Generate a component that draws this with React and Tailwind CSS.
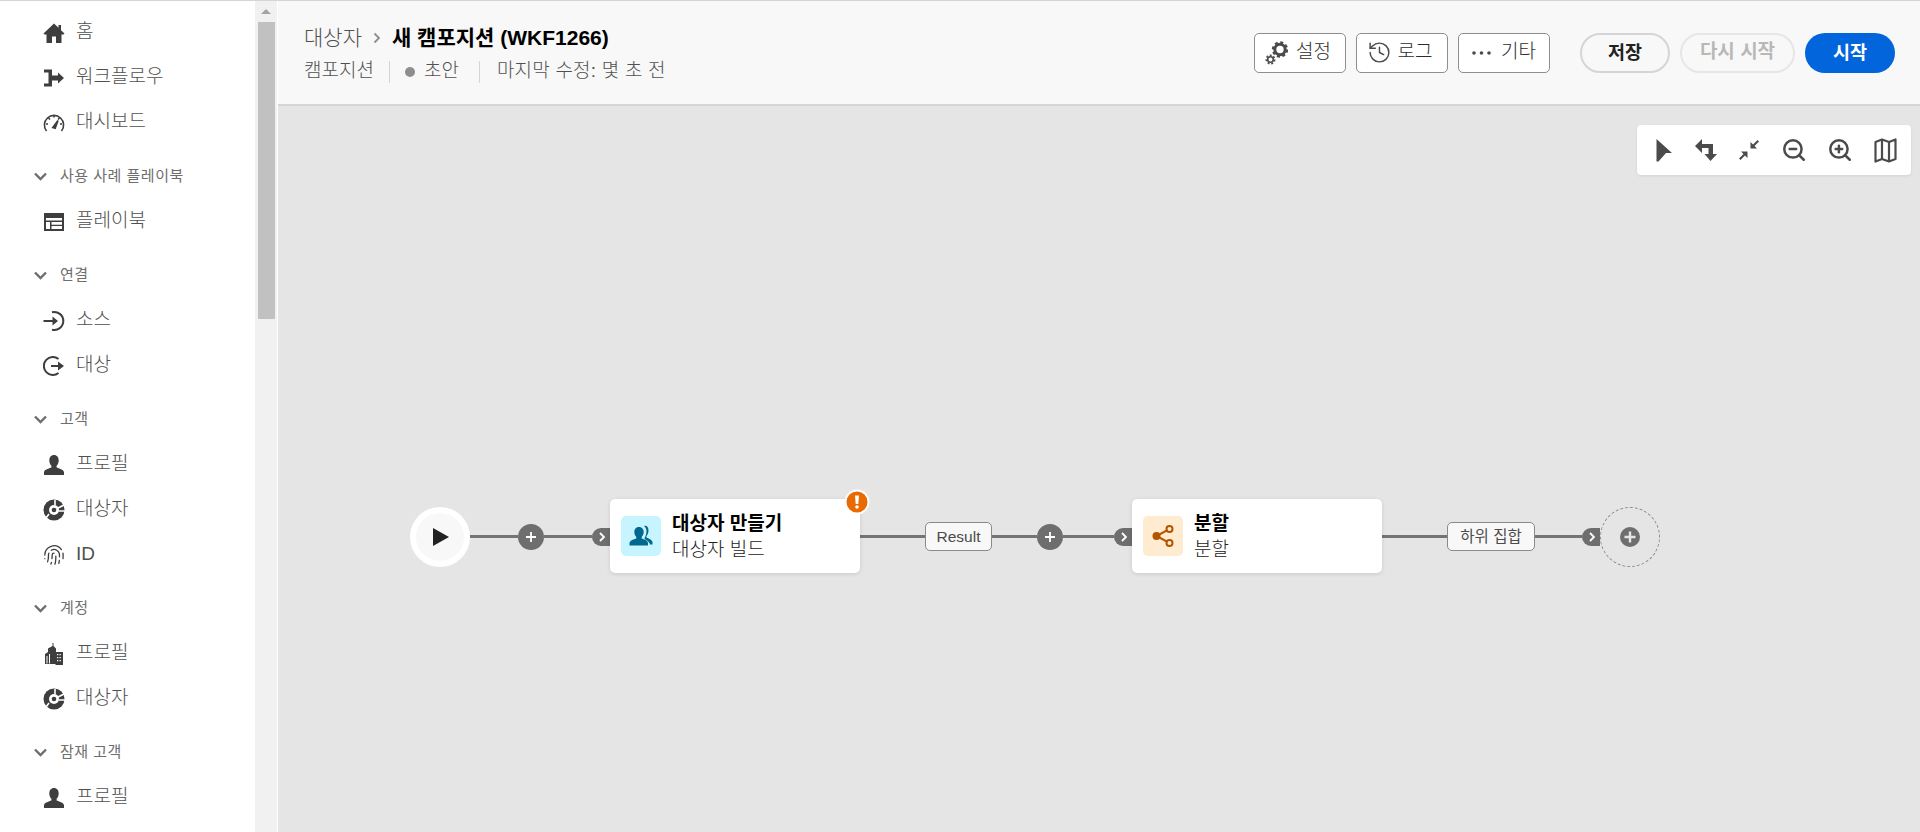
import { History, Fingerprint, ZoomIn, ZoomOut } from "lucide-react";

const FONT = "[font-family:'Liberation_Sans','Noto_Sans_CJK_KR',sans-serif]";

/* Sidebar icons */
const HomeIcon = () => (
  <svg width="22" height="22" viewBox="0 0 22 22" fill="currentColor">
    <path d="M11 1.5 L0.5 11.5 L1.5 12.5 H3.5 V21 H9 V14.5 H13 V21 H18.5 V12.5 H20.5 L21.5 11.5 L18 8.2 V3 H15.5 V5.8 Z" />
  </svg>
);
const WorkflowIcon = () => (
  <svg width="22" height="22" viewBox="0 0 22 22" fill="currentColor">
    <path d="M1 2.5 H9 V8.5 H15 V5.5 L21 11 L15 16.5 V13.5 H9 V19.5 H1 V16.5 H5.5 V5.5 H1 Z" />
  </svg>
);
const GaugeIcon = () => (
  <svg width="22" height="22" viewBox="0 0 22 22" fill="none" stroke="currentColor" strokeWidth="1.6">
    <path d="M3.5 19 A9.6 9.6 0 1 1 18.5 19" />
    <path d="M11 3.5 V5.5 M5.5 6 L7 7.5 M16.5 6 L15 7.5 M3 12 H5 M17 12 H19" />
    <path d="M9.8 15.5 L15 8.5 L12.2 16.3 Z" fill="currentColor" />
  </svg>
);
const TableIcon = () => (
  <svg width="22" height="22" viewBox="0 0 22 22" fill="currentColor">
    <path fillRule="evenodd" d="M1 2 H21 V20 H1 Z M3 7 V9.5 H19 V7 Z M3 11 V18 H7 V11 Z M8.5 11 V13.7 H19 V11 Z M8.5 15 V18 H19 V15 Z" />
  </svg>
);
const SignInIcon = () => (
  <svg width="22" height="22" viewBox="0 0 22 22" fill="none" stroke="currentColor" strokeWidth="2">
    <path d="M9 2.3 A9 9 0 1 1 9 19.7" />
    <path d="M0.5 11 H12" />
    <path d="M9.5 6.5 L15 11 L9.5 15.5 Z" fill="currentColor" stroke="none" />
  </svg>
);
const SignOutIcon = () => (
  <svg width="22" height="22" viewBox="0 0 22 22" fill="none" stroke="currentColor" strokeWidth="2">
    <path d="M15.5 4 A9 9 0 1 0 15.5 18" />
    <path d="M8 11 H18" />
    <path d="M15 6.5 L21 11 L15 15.5 Z" fill="currentColor" stroke="none" />
  </svg>
);
const UserIcon = () => (
  <svg width="22" height="22" viewBox="0 0 22 22" fill="currentColor">
    <path d="M11 1 C14 1 15.7 3.4 15.7 6.4 C15.7 8.8 14.6 10.8 13.6 11.8 V13.4 C16 14.4 20.5 15.2 21 18 V21 H1 V18 C1.5 15.2 6 14.4 8.4 13.4 V11.8 C7.4 10.8 6.3 8.8 6.3 6.4 C6.3 3.4 8 1 11 1 Z" />
  </svg>
);
const SegmentIcon = () => (
  <svg width="22" height="22" viewBox="0 0 22 22">
    <circle cx="11" cy="11" r="10.5" fill="currentColor" />
    <circle cx="11" cy="11" r="5" fill="white" />
    <circle cx="11" cy="11" r="2.3" fill="currentColor" />
    <path d="M14 9.5 L22 5.5 M15.5 12 H22 M12 1 V6 M6 15 L3 19" stroke="white" strokeWidth="1.6" />
  </svg>
);
const BuildingIcon = () => (
  <svg width="22" height="22" viewBox="0 0 22 22" fill="currentColor">
    <path fillRule="evenodd" d="M9.5 0 H10.5 V3 L13 5.5 V9 H20 V22 H12.5 V21 H2 V11 L5 9 V5.5 L9.5 3 Z M6 11 V20.5 H7 V11 Z M3.5 13 V20.5 H4.5 V13 Z" />
    <path d="M14 11 H15.3 V12.3 H14 Z M16.5 11 H17.8 V12.3 H16.5 Z M14 14 H15.3 V15.3 H14 Z M16.5 14 H17.8 V15.3 H16.5 Z M14 17 H15.3 V18.3 H14 Z M16.5 17 H17.8 V18.3 H16.5 Z" fill="white" />
  </svg>
);
const Chevron = () => (
  <svg width="13" height="9" viewBox="0 0 13 9" fill="none" stroke="#6e6e6e" strokeWidth="2.4" className="shrink-0">
    <path d="M1 1.5 L6.5 7 L12 1.5" />
  </svg>
);

/* Header icons */
const GearsIcon = () => (
  <svg width="23" height="24" viewBox="0 0 23 24">
    <circle cx="15" cy="8.5" r="5.2" fill="none" stroke="#4b4b4b" strokeWidth="3" />
    <circle cx="15" cy="8.5" r="7" fill="none" stroke="#4b4b4b" strokeWidth="2.4" strokeDasharray="3 2.5" />
    <circle cx="5.5" cy="18.5" r="2.8" fill="none" stroke="#4b4b4b" strokeWidth="1.6" />
    <circle cx="5.5" cy="18.5" r="4.2" fill="none" stroke="#4b4b4b" strokeWidth="1.6" strokeDasharray="2 1.7" />
  </svg>
);
const MoreIcon = () => (
  <svg width="19" height="4" viewBox="0 0 19 4" fill="#4b4b4b">
    <circle cx="2" cy="2" r="1.8" />
    <circle cx="9.5" cy="2" r="1.8" />
    <circle cx="17" cy="2" r="1.8" />
  </svg>
);

/* Toolbar icons */
const CursorIcon = () => (
  <svg width="18" height="24" viewBox="0 0 18 24" fill="#4b4b4b">
    <path d="M1.5 1 L17 15 H11 L3.5 23.5 H1.5 Z" />
  </svg>
);
const FlipIcon = () => (
  <svg width="24" height="24" viewBox="0 0 24 24" fill="#4b4b4b">
    <path d="M8 1 V6 H19 V16 H23 L16.5 23 L10.5 16 H14.5 V10 H8 V15 L1 8 Z" />
  </svg>
);
const ShrinkIcon = () => (
  <svg width="22" height="22" viewBox="0 0 22 22" fill="#4b4b4b">
    <path d="M19.5 1 L21 2.5 L16.5 7 L19 9.5 H12.5 V3 L15 5.5 Z" />
    <path d="M2.5 21 L1 19.5 L5.5 15 L3 12.5 H9.5 V19 L7 16.5 Z" />
  </svg>
);
const FoldedMapIcon = () => (
  <svg width="23" height="25" viewBox="0 0 23 25" fill="none" stroke="#4b4b4b" strokeWidth="2.2" strokeLinejoin="round">
    <path d="M1.5 4 L8 1.5 L15 4 L21.5 1.5 V21 L15 23.5 L8 21 L1.5 23.5 Z" />
    <path d="M8 1.5 V21 M15 4 V23.5" />
  </svg>
);
const ShareIcon = () => (
  <svg width="24" height="24" viewBox="0 0 24 24" fill="none" stroke="#b35400" strokeWidth="2">
    <circle cx="5.5" cy="12" r="4" fill="#b35400" stroke="none" />
    <circle cx="18.5" cy="5" r="3" />
    <circle cx="18.5" cy="19" r="3" />
    <path d="M5.5 12 L16 6.3 M5.5 12 L16 17.7" />
  </svg>
);
const UsersIcon = () => (
  <svg width="24" height="24" viewBox="0 0 24 24" fill="#00678f">
    <path d="M15 2 C17.5 1 19.5 3 19.5 6.5 C19.5 9 18.5 11 17.5 12 V13.5 C19.5 14.5 23 15.5 23.5 18 V20.5 H21 C20.5 17 15 15.5 15.5 14 C16.5 12.5 17.5 10 17.5 7 C17.5 5 16.5 3 15 2 Z" />
    <path d="M10 3 C13 3 14.7 5.2 14.7 8 C14.7 10.2 13.6 12 12.7 13 V14.5 C15 15.4 18.6 16.2 19 19 V21.5 H0.5 V19 C1 16.2 5 15.4 7.3 14.5 V13 C6.4 12 5.3 10.2 5.3 8 C5.3 5.2 7 3 10 3 Z" />
  </svg>
);
const WarnBadge = () => (
  <svg width="26" height="26" viewBox="0 0 26 26" className="absolute right-[-10px] top-[-10px]">
    <circle cx="13" cy="13" r="12.5" fill="white" />
    <circle cx="13" cy="13" r="10.5" fill="#e86a00" />
    <path d="M11 6.5 H15 L14.3 15 H11.7 Z" fill="white" />
    <circle cx="13" cy="18" r="1.8" fill="white" />
  </svg>
);

const NavItem = ({ icon, label }) => (
  <div className="flex h-[45px] items-center pl-[43px] text-[#3e3e3e]">
    <span className="flex w-[33px] shrink-0">{icon}</span>
    <span className="text-[19px] font-light text-[#505050]">{label}</span>
  </div>
);

const NavHeader = ({ label }) => (
  <div className="mt-[9px] flex h-[45px] items-center gap-[13px] pl-[34px] text-[15px] tracking-[0.5px] text-[#6e6e6e]">
    <Chevron />
    <span>{label}</span>
  </div>
);

const Line = ({ className }) => <div className={`h-[3px] bg-[#747474] ${className}`} />;

const PlusDot = () => (
  <div className="mt-[2px] flex h-[26px] w-[26px] shrink-0 items-center justify-center rounded-full bg-[#6e6e6e]">
    <svg width="12" height="12" viewBox="0 0 12 12" stroke="white" strokeWidth="1.8">
      <path d="M6 1 V11 M1 6 H11" />
    </svg>
  </div>
);

const Tab = () => (
  <div className="mt-[2px] flex h-[18px] w-[18px] shrink-0 items-center justify-center rounded-l-full bg-[#6e6e6e] pl-[2px]">
    <svg width="6" height="10" viewBox="0 0 6 10" fill="none" stroke="white" strokeWidth="1.8">
      <path d="M1 1 L5 5 L1 9" />
    </svg>
  </div>
);

const EdgeLabel = ({ className, children }) => (
  <div className={`mt-[1px] flex h-[29px] shrink-0 items-center justify-center rounded-[5px] border border-[#8a8a8a] bg-[#f8f8f8] text-[15.5px] text-[#4b4b4b] ${className}`}>
    {children}
  </div>
);

const Card = ({ icon, iconBg, title, subtitle, warning }) => (
  <div className="relative flex h-[74px] w-[250px] shrink-0 items-center gap-[11px] rounded-[5px] bg-white pl-[11px] shadow-[0_1px_4px_rgba(0,0,0,0.12)]">
    <div className={`flex h-[40px] w-[40px] shrink-0 items-center justify-center rounded-[5px] ${iconBg}`}>{icon}</div>
    <div className="flex flex-col pt-[2px]">
      <span className="text-[19px] leading-[26px] font-bold text-black">{title}</span>
      <span className="text-[19px] leading-[26px] font-light text-[#222]">{subtitle}</span>
    </div>
    {warning && <WarnBadge />}
  </div>
);

const ActionButton = ({ icon, label, className }) => (
  <button className={`flex h-[40px] w-[92px] items-center justify-center rounded-[5px] border border-[#8e8e8e] bg-white text-[19px] font-light text-[#2c2c2c] ${className}`}>
    {icon}
    {label}
  </button>
);

export default function App() {
  return (
    <div className={`flex h-[832px] w-[1920px] overflow-hidden border-t border-[#d5d5d5] bg-white ${FONT}`}>
      {/* Sidebar */}
      <nav className="h-full w-[255px] shrink-0 overflow-hidden bg-white pt-[9px]">
        <NavItem icon={<HomeIcon />} label="홈" />
        <NavItem icon={<WorkflowIcon />} label="워크플로우" />
        <NavItem icon={<GaugeIcon />} label="대시보드" />
        <NavHeader label="사용 사례 플레이북" />
        <NavItem icon={<TableIcon />} label="플레이북" />
        <NavHeader label="연결" />
        <NavItem icon={<SignInIcon />} label="소스" />
        <NavItem icon={<SignOutIcon />} label="대상" />
        <NavHeader label="고객" />
        <NavItem icon={<UserIcon />} label="프로필" />
        <NavItem icon={<SegmentIcon />} label="대상자" />
        <NavItem icon={<Fingerprint size={22} strokeWidth={1.4} />} label="ID" />
        <NavHeader label="계정" />
        <NavItem icon={<BuildingIcon />} label="프로필" />
        <NavItem icon={<SegmentIcon />} label="대상자" />
        <NavHeader label="잠재 고객" />
        <NavItem icon={<UserIcon />} label="프로필" />
        <NavItem icon={<BuildingIcon />} />
      </nav>

      {/* Scrollbar */}
      <div className="flex h-full w-[22px] shrink-0 flex-col items-center bg-[#f1f1f1]">
        <div className="flex h-[21px] items-center">
          <div className="h-0 w-0 border-x-[5px] border-b-[5px] border-x-transparent border-b-[#a3a3a3]" />
        </div>
        <div className="h-[297px] w-[17px] bg-[#c1c1c1]" />
      </div>
      <div className="w-[1px] shrink-0 bg-white" />

      {/* Main */}
      <main className="flex min-w-0 flex-1 flex-col">
        <header className="flex h-[105px] shrink-0 items-center justify-between border-b-2 border-[#d5d5d5] bg-[#f8f8f8] pr-[25px] pl-[26px]">
          <div className="flex flex-col gap-[9px] pt-[3px]">
            <div className="flex h-[26px] items-center text-[21px]">
              <span className="font-light text-[#505050]">대상자</span>
              <svg width="8" height="12" viewBox="0 0 8 12" fill="none" stroke="#8e8e8e" strokeWidth="1.8" className="mx-[11px]">
                <path d="M1.5 1.5 L6 6 L1.5 10.5" />
              </svg>
              <span className="font-bold text-black">새 캠포지션 (WKF1266)</span>
            </div>
            <div className="flex h-[24px] items-center text-[19px] font-light text-[#505050]">
              <span>캠포지션</span>
              <div className="ml-[15px] mr-[15px] h-[22px] w-[1px] bg-[#d5d5d5]" />
              <div className="h-[10px] w-[10px] rounded-full bg-[#8e8e8e]" />
              <span className="ml-[9px]">초안</span>
              <div className="ml-[20px] mr-[17px] h-[22px] w-[1px] bg-[#d5d5d5]" />
              <span className="tracking-[0.2px]">마지막 수정: 몇 초 전</span>
            </div>
          </div>

          <div className="flex items-center">
            <ActionButton icon={<GearsIcon />} label="설정" className="gap-[8px] pr-[4px]" />
            <div className="w-[10px]" />
            <ActionButton icon={<History size={25} strokeWidth={1.4} color="#4b4b4b" />} label="로그" className="gap-[6px] pr-[5px]" />
            <div className="w-[10px]" />
            <ActionButton icon={<MoreIcon />} label="기타" className="gap-[10px]" />
            <button className="ml-[30px] h-[40px] w-[90px] rounded-full border-2 border-[#d5d5d5] text-[18.5px] font-bold text-[#222]">저장</button>
            <button className="ml-[10px] h-[40px] w-[115px] rounded-full border-2 border-[#e6e6e6] text-[19px] font-bold text-[#b8b8b8]">다시 시작</button>
            <button className="ml-[10px] h-[40px] w-[90px] rounded-full bg-[#0265dc] text-[18.5px] font-bold text-white">시작</button>
          </div>
        </header>

        {/* Canvas */}
        <section className="relative flex-1 bg-[#e5e5e5] pt-[393px] pl-[132px]">
          <div className="absolute top-[19px] right-[9px] flex h-[50px] w-[274px] items-center justify-between rounded-[4px] bg-white pr-[14px] pl-[18px] shadow-[0_1px_3px_rgba(0,0,0,0.08)]">
            <CursorIcon />
            <FlipIcon />
            <ShrinkIcon />
            <ZoomOut size={26} strokeWidth={2.3} color="#4b4b4b" />
            <ZoomIn size={26} strokeWidth={2.3} color="#4b4b4b" />
            <FoldedMapIcon />
          </div>

          <div className="flex h-[74px] items-center">
            <div className="mt-[2px] flex h-[60px] w-[60px] shrink-0 items-center justify-center rounded-full border-[6px] border-white bg-[#f8f8f8]">
              <svg width="18" height="20" viewBox="0 0 18 20" fill="#222" className="ml-[1px]">
                <path d="M1 1 L17 10 L1 19 Z" />
              </svg>
            </div>
            <Line className="w-[48px]" />
            <PlusDot />
            <Line className="w-[48px]" />
            <Tab />
            <Card icon={<UsersIcon />} iconBg="bg-[#c7f5ff]" title="대상자 만들기" subtitle="대상자 빌드" warning />
            <Line className="w-[65px]" />
            <EdgeLabel className="w-[67px]">Result</EdgeLabel>
            <Line className="w-[45px]" />
            <PlusDot />
            <Line className="w-[51px]" />
            <Tab />
            <Card icon={<ShareIcon />} iconBg="bg-[#ffebcf]" title="분할" subtitle="분할" />
            <Line className="w-[65px]" />
            <EdgeLabel className="w-[88px]">하위 집합</EdgeLabel>
            <Line className="w-[47px]" />
            <Tab />
            <div className="mt-[2px] flex h-[60px] w-[60px] shrink-0 items-center justify-center rounded-full border border-dashed border-[#8a8a8a]">
              <div className="flex h-[20px] w-[20px] items-center justify-center rounded-full bg-[#6e6e6e]">
                <svg width="12" height="12" viewBox="0 0 12 12" stroke="#e5e5e5" strokeWidth="2.4">
                  <path d="M6 0.5 V11.5 M0.5 6 H11.5" />
                </svg>
              </div>
            </div>
          </div>
        </section>
      </main>
    </div>
  );
}
